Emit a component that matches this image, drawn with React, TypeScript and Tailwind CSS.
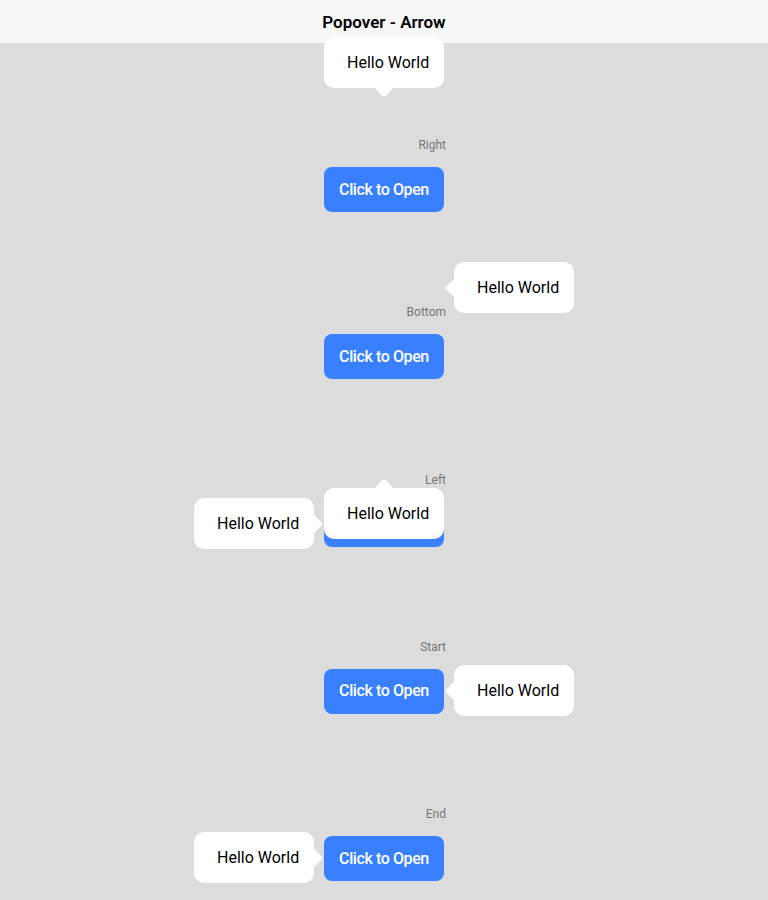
import React from "react"

type Side = "top" | "bottom" | "left" | "right"

const sections = ["Right", "Bottom", "Left", "Start", "End"]

// popovers as they sit in the shot (overlay layer)
const popovers: { x: number; y: number; arrow: Side }[] = [
  { x: 324, y: 37, arrow: "bottom" },
  { x: 454, y: 262, arrow: "left" },
  { x: 324, y: 488, arrow: "top" },
  { x: 194, y: 498, arrow: "right" },
  { x: 454, y: 665, arrow: "left" },
  { x: 194, y: 832, arrow: "right" },
]

function Arrow({ side }: { side: Side }) {
  const pos = {
    top: "left-1/2 top-0 -translate-x-1/2 -translate-y-1/2",
    bottom: "left-1/2 bottom-0 -translate-x-1/2 translate-y-1/2",
    left: "top-1/2 left-0 -translate-x-1/2 -translate-y-1/2",
    right: "top-1/2 right-0 translate-x-1/2 -translate-y-1/2",
  }[side]
  return <span className={`absolute h-[13px] w-[13px] rotate-45 rounded-[2px] bg-white ${pos}`} />
}

function Popover({ x, y, arrow }: { x: number; y: number; arrow: Side }) {
  return (
    <div
      className="absolute z-20 flex h-[51px] w-[120px] items-center rounded-[10px] bg-white pl-[23px] text-[16px] text-black"
      style={{ left: x, top: y }}
    >
      <Arrow side={arrow} />
      <span className="relative">Hello World</span>
    </div>
  )
}

export default function App() {
  return (
    <div className="relative h-[900px] overflow-hidden bg-[#dcdcdc] font-['Roboto',sans-serif]">
      <header className="relative z-10 flex h-[43px] items-center justify-center bg-[#f7f7f7] pt-[2px]">
        <h1 className="text-[17px] font-semibold text-black">Popover - Arrow</h1>
      </header>

      <main className="flex flex-col items-center gap-[93.25px] pt-[95px]">
        {sections.map((label) => (
          <section key={label} className="flex w-[120px] flex-col">
            <p className="-mr-[2px] text-right text-[12px] leading-[14px] text-[#767676]">{label}</p>
            <button className="mt-[15px] h-[45px] w-[120px] rounded-[8px] bg-[#3880ff] text-[16px] font-medium tracking-[-0.4px] text-white">
              Click to Open
            </button>
          </section>
        ))}
      </main>

      {popovers.map((p, i) => (
        <Popover key={i} {...p} />
      ))}
    </div>
  )
}
